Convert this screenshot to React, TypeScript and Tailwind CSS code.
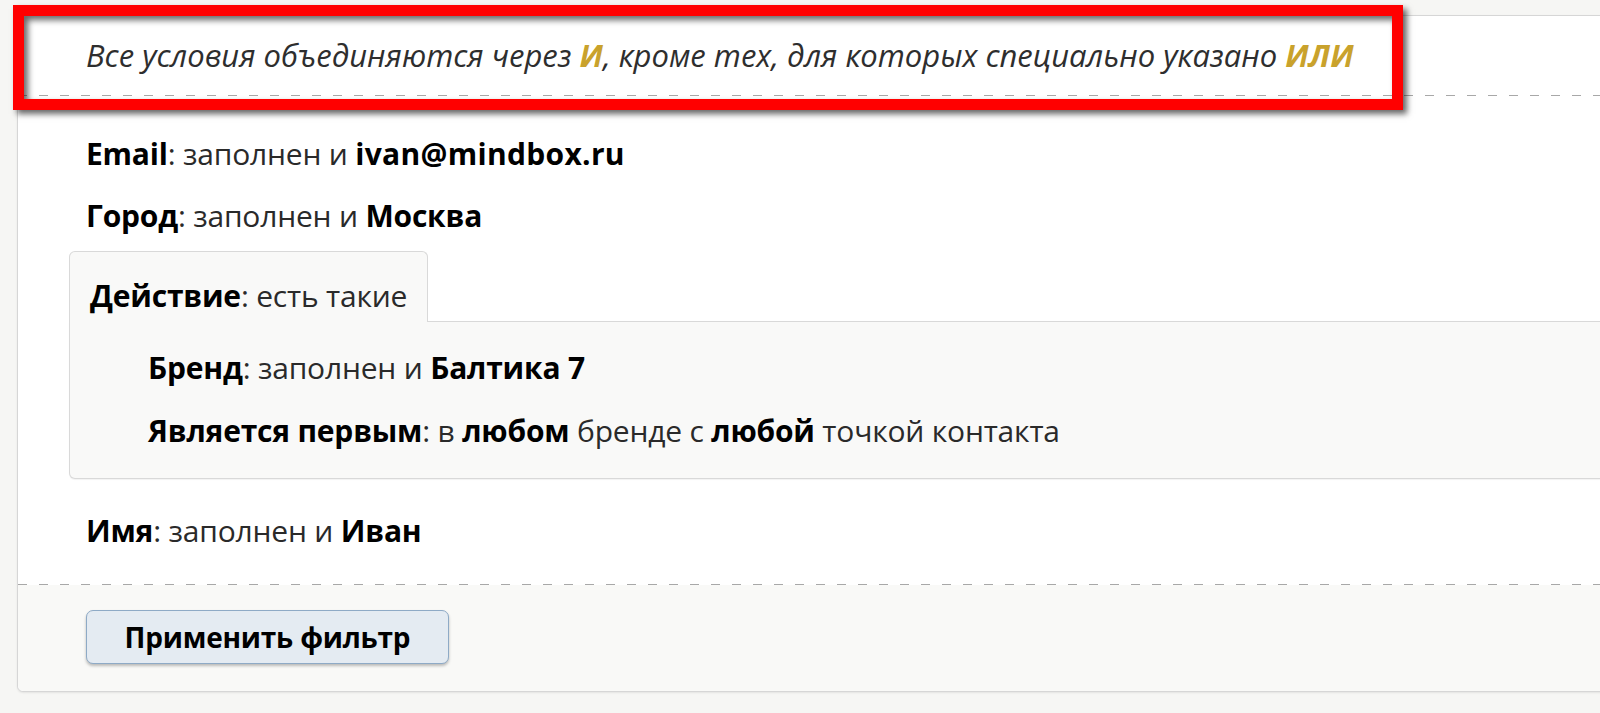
import React from "react";

const font = { fontFamily: '"Open Sans", "Noto Sans", sans-serif' };

function Dashed() {
  return (
    <div className="h-px w-full bg-[linear-gradient(to_right,#a8a8a8_45%,transparent_45%)] bg-[length:21px_1px]" />
  );
}

function Row({ children, cls = "" }: { children: React.ReactNode; cls?: string }) {
  return <div className={"flex items-center whitespace-nowrap " + cls}>{children}</div>;
}

export default function App() {
  return (
    <div
      className="relative w-[1600px] h-[713px] overflow-hidden bg-[#f6f6f4] text-[30px] text-[#2a2a2a] tracking-[-0.2px]"
      style={font}
    >
      <div className="ml-[17px] mt-[15px] w-[1620px] h-[677px] border border-[#d6d6d6] rounded-bl-[6px] bg-white shadow-[0_1px_2px_rgba(0,0,0,0.08)] flex flex-col">
        {/* header */}
        <div className="h-[79px] flex items-center pl-[68px] italic text-[31px] tracking-normal text-[#2e2e2e]">
          Все условия объединяются через&nbsp;
          <span className="font-bold text-[#c9a22c]">И</span>, кроме тех, для которых специально указано&nbsp;
          <span className="font-bold text-[#c9a22c]">ИЛИ</span>
        </div>
        <Dashed />
        {/* body */}
        <div className="pt-[26px] pb-[23px] flex flex-col">
          <Row cls="h-[62px] pl-[68px]">
            <b className="text-black">Email</b>: заполнен и&nbsp;<b className="text-black tracking-[0.3px]">ivan@mindbox.ru</b>
          </Row>
          <Row cls="h-[62px] pl-[68px]">
            <b className="text-black">Город</b>: заполнен и&nbsp;<b className="text-black">Москва</b>
          </Row>
          <div className="mt-[5px] ml-[51px] flex flex-col">
            <div className="flex">
              <div className="w-[359px] h-[71px] border border-b-0 border-[#d9d9d9] rounded-t-[6px] bg-[#f9f9f8] flex items-center pl-[20px] pt-[16px] whitespace-nowrap">
                <b className="text-black">Действие</b>: есть такие
              </div>
              <div className="flex-1 border-b border-[#d9d9d9]" />
            </div>
            <div className="border border-t-0 border-[#d9d9d9] rounded-b-[6px] bg-[#f9f9f8] pt-[14px] pb-[16px] pl-[78px] shadow-[0_1px_1px_rgba(0,0,0,0.05)]">
              <Row cls="h-[62px]">
                <b className="text-black">Бренд</b>: заполнен и&nbsp;<b className="text-black">Балтика 7</b>
              </Row>
              <Row cls="h-[64px]">
                <b className="text-black">Является первым</b>: в&nbsp;<b className="text-black">любом</b>&nbsp;бренде с&nbsp;
                <b className="text-black">любой</b>&nbsp;точкой контакта
              </Row>
            </div>
          </div>
          <Row cls="h-[62px] mt-[20px] pl-[68px]">
            <b className="text-black">Имя</b>: заполнен и&nbsp;<b className="text-black">Иван</b>
          </Row>
        </div>
        <Dashed />
        {/* footer */}
        <div className="flex-1 bg-[#f9f9f7] pt-[25px] pl-[68px] rounded-bl-[6px]">
          <button className="w-[363px] h-[54px] rounded-[7px] border border-[#8eaac6] bg-[#e4ebf2] shadow-[0_2px_3px_rgba(0,0,0,0.25)] font-bold text-black text-[28px] tracking-[-0.2px]" style={font}>
            Применить фильтр
          </button>
        </div>
      </div>

      {/* red highlight annotation */}
      <div className="absolute left-[13px] top-[5px] w-[1390px] h-[105px] border-[11px] border-[#ff0000] shadow-[4px_4px_6px_rgba(0,0,0,0.6),inset_4px_4px_6px_rgba(0,0,0,0.6)] pointer-events-none" />
    </div>
  );
}
